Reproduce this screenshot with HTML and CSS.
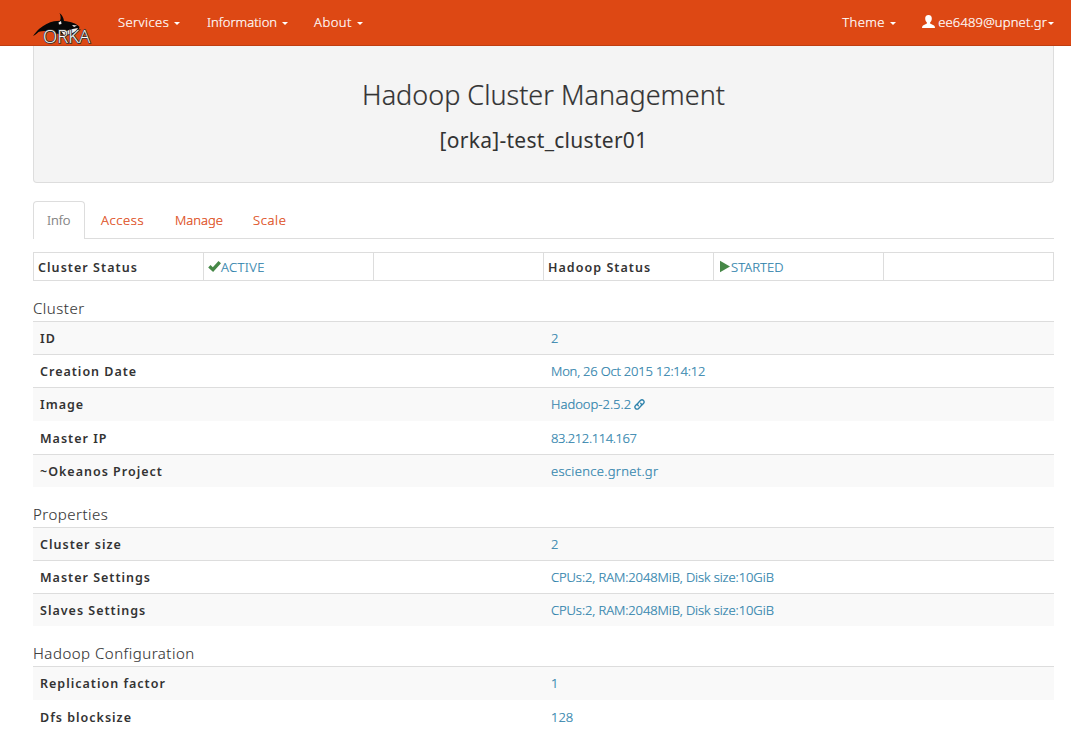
FILE: index.html
```html
<!DOCTYPE html>
<html lang="en">
<head>
<meta charset="utf-8">
<title>Hadoop Cluster Management</title>
<link rel="stylesheet" href="styles.css">
</head>
<body>
<nav class="navbar">
  <a class="brand" href="#" aria-label="ORKA">
    <svg width="60" height="34" viewBox="0 0 60 34">
      <path d="M0 23C2 20 4 18 6 16C11 12 16 9 21 8.200L27 7.800C28.300 5 27.500 2 26.500 0C29.500 2 30.500 5 31 8C38 8.500 44 10.500 46.500 14C46 17 43 21 37 22C31 23 27 20 23 21C18 17 10 18 5.500 19C4 20 3 22 0 23Z" fill="#080808"/>
      <path d="M25.500 9.500L28 8L28.500 11L26 11.500ZM27 17L32 19L37 16.500L45 15L43 18L38 21L31 22Z" fill="#f3eeee"/>
      <path d="M39 12L44 12.500L41 14Z" fill="#f3eeee"/>
      <text class="brand-text" x="10" y="30" textLength="47" lengthAdjust="spacingAndGlyphs">ORKA</text>
    </svg>
  </a>
  <a class="nav-link services" href="#">Services<i class="caret"></i></a>
  <a class="nav-link information" href="#">Information<i class="caret"></i></a>
  <a class="nav-link about" href="#">About<i class="caret"></i></a>
  <a class="nav-link theme" href="#">Theme<i class="caret"></i></a>
  <a class="nav-link user" href="#"><svg class="user-icon" width="13" height="13" viewBox="0 0 13 13"><path d="M6.500 0C8.700 0 10 1.500 9.800 3.800C9.700 5.500 9 6.700 8.100 7.500V8.600L12 10.400Q13 11 13 13H0Q0 11 1 10.400L4.900 8.600V7.500C4 6.700 3.300 5.500 3.200 3.800C3 1.500 4.300 0 6.500 0Z" fill="#fff"/></svg><span class="email">ee6489@upnet.gr</span><i class="caret"></i></a>
</nav>
<main class="content">
  <header class="hero">
    <h1 class="title">Hadoop Cluster Management</h1>
    <h2 class="subtitle">[orka]-test_cluster01</h2>
  </header>
  <div class="tabs">
    <a class="tab active" href="#">Info</a>
    <a class="tab access" href="#">Access</a>
    <a class="tab manage" href="#">Manage</a>
    <a class="tab scale" href="#">Scale</a>
  </div>
  <div class="status">
    <div class="cell label">Cluster Status</div>
    <div class="cell state"><svg width="13" height="13" viewBox="0 0 13 13"><path d="M.2 7.500L2.500 5L4.800 7.300L10.500 1L13 3.300L5.100 12Z" fill="#468847"/></svg>ACTIVE</div>
    <div class="cell"></div>
    <div class="cell label">Hadoop Status</div>
    <div class="cell state started"><svg width="13" height="13" viewBox="0 0 13 13"><path d="M2 .7L12 6.500L2 12.300Z" fill="#468847"/></svg>STARTED</div>
    <div class="cell"></div>
  </div>
  <h3 class="section">Cluster</h3>
  <div class="table">
    <div class="row odd"><b class="label">ID</b><span class="value">2</span></div>
    <div class="row"><b class="label">Creation Date</b><span class="value date">Mon, 26 Oct 2015 12:14:12</span></div>
    <div class="row odd tall"><b class="label">Image</b><span class="value image">Hadoop-2.5.2<svg class="link-icon" width="11" height="11" viewBox="0 0 11 11"><g fill="none" stroke="#2f83ac" stroke-width="1.400" stroke-linecap="round"><path d="M4.300 6.800C3.100 5.800 3.300 4.700 4.100 3.900L6.400 1.600C7.500.5 8.700.7 9.500 1.500C10.300 2.300 10.500 3.500 9.400 4.600L8.200 5.800"/><path d="M6.700 4.200C7.900 5.200 7.700 6.300 6.900 7.100L4.600 9.400C3.500 10.500 2.300 10.300 1.500 9.500C.7 8.700.5 7.500 1.600 6.400L2.800 5.200"/></g></svg></span></div>
    <div class="row plain"><b class="label">Master IP</b><span class="value ip">83.212.114.167</span></div>
    <div class="row odd"><b class="label">~Okeanos Project</b><span class="value project">escience.grnet.gr</span></div>
  </div>
  <h3 class="section">Properties</h3>
  <div class="table">
    <div class="row odd"><b class="label">Cluster size</b><span class="value">2</span></div>
    <div class="row"><b class="label">Master Settings</b><span class="value specs">CPUs:2, RAM:2048MiB, Disk size:10GiB</span></div>
    <div class="row odd"><b class="label">Slaves Settings</b><span class="value specs">CPUs:2, RAM:2048MiB, Disk size:10GiB</span></div>
  </div>
  <h3 class="section">Hadoop Configuration</h3>
  <div class="table">
    <div class="row odd tall"><b class="label">Replication factor</b><span class="value">1</span></div>
    <div class="row plain"><b class="label">Dfs blocksize</b><span class="value">128</span></div>
  </div>
</main>
</body>
</html>
```
FILE: styles.css
```css
* { box-sizing: border-box; }
html { overflow: hidden; }
body { margin: 0; height: 732px; overflow: hidden; background: #fff; color: #333; font: 300 13px/20px "Noto Sans", "Open Sans", sans-serif; }
a { text-decoration: none; }
.navbar { display: flex; height: 46px; padding-right: 17px; background: #dd4814; border-bottom: 1px solid #bf3e11; }
.brand { width: 85px; padding: 13px 0 0 33px; }
.brand svg { display: block; }
.brand-text { font: 300 17.500px "Open Sans", sans-serif; fill: #fff; stroke: #333; stroke-width: 1.600px; paint-order: stroke; }
.nav-link { display: flex; align-items: center; height: 44px; color: #fff; white-space: nowrap; -webkit-text-stroke: .2px; }
.caret { width: 0; height: 0; margin: 2px 0 0 5px; border: 3px solid transparent; border-top-color: #fff; border-bottom: 0; }
.services { margin-left: 33px; width: 89px; letter-spacing: .4px; }
.information { width: 107px; }
.about { width: 60px; letter-spacing: .5px; }
.theme { margin-left: auto; width: 80px; letter-spacing: .4px; }
.user .caret { margin-left: 1px; }
.user-icon { margin-top: -2px; }
.email { margin-left: 3px; letter-spacing: .15px; }
.content { width: 1021px; margin-left: 33px; }
.hero { height: 137px; padding-top: 31px; text-align: center; background: #f4f4f4; border: 1px solid #ddd; border-top: 0; border-radius: 0 0 4px 4px; }
.title { margin: 0; font-size: 27px; line-height: 36px; font-weight: 300; -webkit-text-stroke: .2px; }
.subtitle { margin: 13px 0 0; font-size: 21px; line-height: 28px; font-weight: 400; letter-spacing: .28px; }
.tabs { display: flex; height: 38px; margin: 18px 0 13px; border-bottom: 1px solid #ddd; }
.tab { height: 37px; line-height: 38px; color: #dd4814; -webkit-text-stroke: .2px; }
.tab.active { width: 52px; height: 38px; padding-left: 13px; line-height: 37px; color: #777; background: #fff; border: 1px solid #ddd; border-bottom: 0; border-radius: 4px 4px 0 0; }
.access { margin-left: 16px; width: 74px; letter-spacing: .6px; }
.manage { width: 78px; }
.scale { letter-spacing: .6px; }
.status { display: grid; grid-template-columns: repeat(6, 170px); width: 1021px; height: 29px; border: 1px solid #ddd; }
.cell { display: flex; align-items: center; padding: 1px 0 0 4px; border-left: 1px solid #ddd; }
.cell:first-child { border-left: 0; }
.cell:not(:first-child) { margin-left: -1px; }
.label { font-weight: 600; font-size: 12.500px; letter-spacing: 1px; }
.status .label { padding-top: 2px; letter-spacing: 1.050px; }
.state { padding-top: 0; color: #2f83ac; letter-spacing: .4px; -webkit-text-stroke: .2px; }
.started { letter-spacing: .05px; }
.section { height: 40px; margin: 0; padding-top: 16px; font-size: 15px; line-height: 22px; font-weight: 300; letter-spacing: .5px; -webkit-text-stroke: .1px; }
.row { display: grid; grid-template-columns: 511px 1fr; height: 33px; padding: 1px 0 0 7px; align-items: center; border-top: 1px solid #ddd; }
.odd { background: #f9f9f9; }
.tall { height: 34px; }
.tall .label { margin-top: -1px; }
.plain { border-top: 0; padding-top: 2px; }
.value { margin-top: -2px; color: #2f83ac; -webkit-text-stroke: .2px; }
.date { letter-spacing: -.2px; }
.ip { letter-spacing: -.4px; }
.project { letter-spacing: .3px; }
.specs { letter-spacing: -.09px; }
.link-icon { margin-left: 3px; vertical-align: -1px; }
```
